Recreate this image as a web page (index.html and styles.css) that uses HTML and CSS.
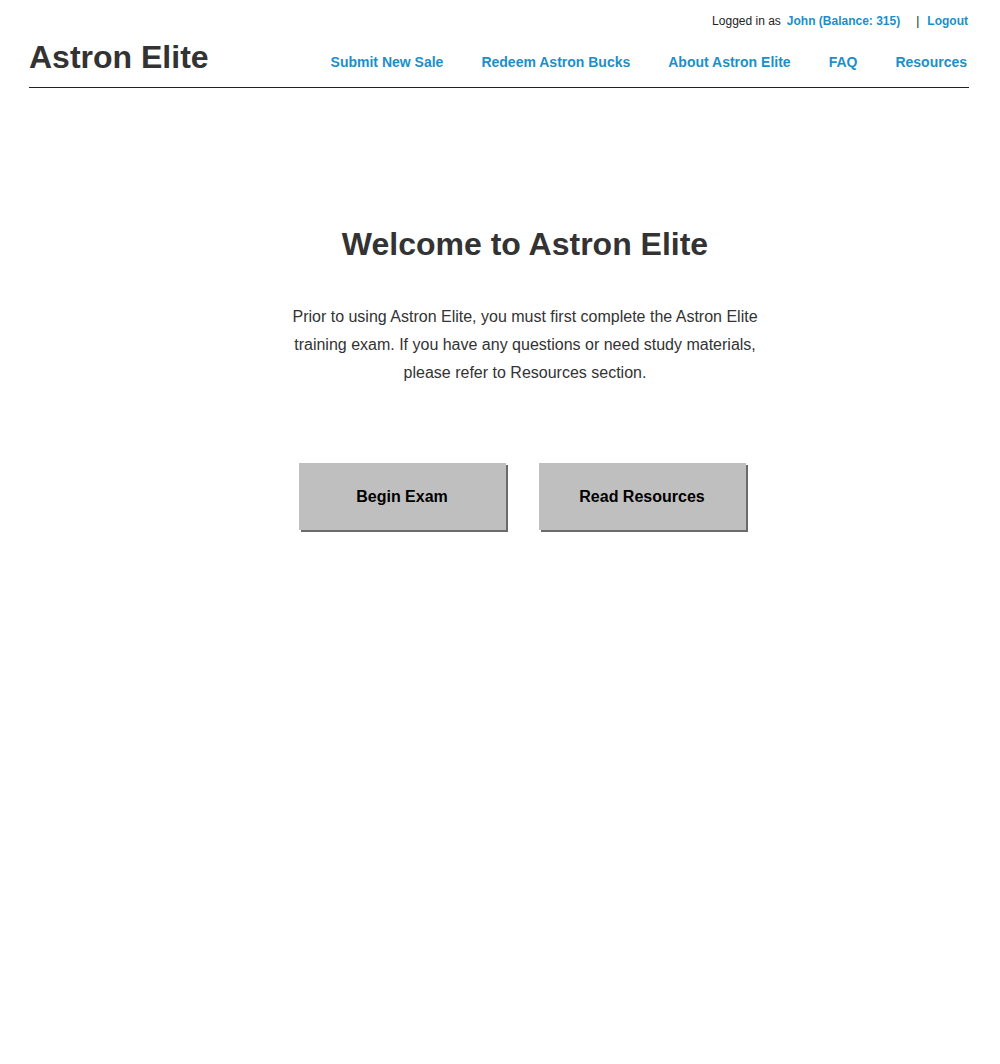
FILE: index.html
```html
<html lang="en">
<head>
    <meta charset="UTF-8">
    <meta name="viewport" content="width=device-width, initial-scale=1.0">
    <title>Astron Elite</title>
    <link rel="stylesheet" href="styles.css">
</head>
<body>
    <div class="page">
        <div class="user-bar">
            <span class="user-lbl">Logged in as</span>
            <a href="#" class="user-name">John (Balance: 315)</a>
            <span class="sep">|</span>
            <a href="#" class="logout">Logout</a>
        </div>
        <div class="header">
            <h1 class="logo">Astron Elite</h1>
            <nav class="nav">
                <a href="#">Submit New Sale</a>
                <a href="#">Redeem Astron Bucks</a>
                <a href="#">About Astron Elite</a>
                <a href="#">FAQ</a>
                <a href="#">Resources</a>
            </nav>
        </div>
        <div class="welcome">
            <h2 class="welcome-title">Welcome to Astron Elite</h2>
            <p class="welcome-txt">Prior to using Astron Elite, you must first complete the Astron Elite training exam. If you have any questions or need study materials, please refer to Resources section.</p>
            <div class="actions">
                <a href="#" class="btn">Begin Exam</a>
                <a href="#" class="btn">Read Resources</a>
            </div>
        </div>
    </div>
</body>
</html>
```

FILE: styles.css
```css
* {
    box-sizing: border-box;
    margin: 0;
}
body {
    background: #fff;
    font-family: 'Liberation Sans', Arial, sans-serif;
    color: #333;
}
a {
    text-decoration: none;
    color: #1b8fca;
}
.page {
    width: 940px;
    margin: 0 0 0 29px;
}
.user-bar { /*logged in line at the very top*/
    display: flex;
    justify-content: flex-end;
    align-items: center;
    padding-top: 13px;
    padding-right: 1px;
    font-size: 12px;
    height: 28px;
}
.user-lbl {
    color: #222;
    margin-right: 6px;
}
.user-name, .logout {
    font-weight: bold;
}
.sep {
    color: #222;
    margin: 0 8px 0 16px;
}
.header {
    display: flex;
    justify-content: space-between;
    align-items: flex-end;
    border-bottom: 1px solid #222;
    padding-bottom: 14px;
    margin-top: 11px;
}
.logo {
    font-size: 32px;
    font-weight: bold;
    color: #333;
    line-height: 36px;
    margin-bottom: -2px;
}
.nav {
    display: flex;
    gap: 38px;
    padding-bottom: 3px;
    padding-right: 2px;
}
.nav a {
    font-size: 14px;
    font-weight: bold;
}
.welcome {
    padding-left: 52px;
    display: flex;
    flex-direction: column;
    align-items: center;
    text-align: center;
}
.welcome-title {
    font-size: 32px;
    font-weight: bold;
    color: #333;
    margin-top: 136px;
    line-height: 40px;
}
.welcome-txt {
    width: 480px;
    font-size: 16px;
    line-height: 28px;
    margin-top: 39px;
    color: #333;
}
.actions {
    display: flex;
    gap: 33px;
    margin-top: 76px;
    padding-right: 6px;
}
.btn { /*grey exam buttons*/
    width: 207px;
    height: 67px;
    display: flex;
    align-items: center;
    justify-content: center;
    background: #bfbfbf;
    color: #000;
    font-weight: bold;
    font-size: 16px;
    box-shadow: 2px 2px 0 #6b6b6b;
}
```
